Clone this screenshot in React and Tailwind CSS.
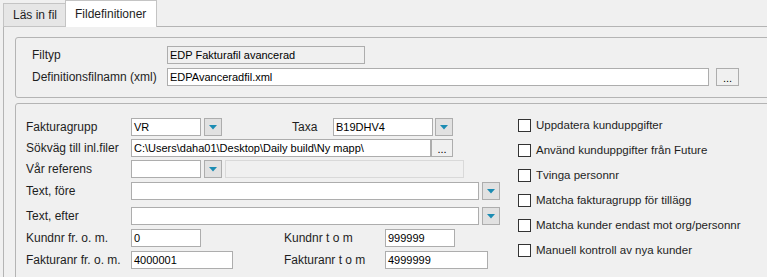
import React from "react";

const font = { fontFamily: '"Liberation Sans", Arial, sans-serif' };

function DropBtn({ className = "" }) {
  return (
    <div className={`w-[18px] h-[18px] border border-[#adadad] bg-[#e1e1e1] flex items-center justify-center ${className}`}>
      <svg width="8" height="5" viewBox="0 0 8 5">
        <path d="M0 0 H8 L4 4.5 Z" fill="#1b8cb3" />
      </svg>
    </div>
  );
}

function DotsBtn({ className = "" }) {
  return (
    <div className={`h-[18px] border border-[#adadad] bg-[#f0f0f0] flex items-end justify-center pb-[3px] text-[11px] leading-[8px] text-black ${className}`}>
      ...
    </div>
  );
}

function Input({ className = "", children, disabled }) {
  return (
    <div
      className={`h-[18px] border ${disabled ? "border-[#adadad] bg-[#f0f0f0]" : "border-[#adadad] bg-white"} px-[2px] flex items-center text-[11px] text-black whitespace-nowrap overflow-hidden ${className}`}
    >
      {children}
    </div>
  );
}

function Label({ className = "", children }) {
  return <div className={`text-[12px] text-[#1e1e1e] whitespace-nowrap ${className}`}>{children}</div>;
}

function Check({ children, className = "" }) {
  return (
    <div className={`flex items-center h-[13px] ${className}`}>
      <div className="w-[13px] h-[13px] border border-[#333] bg-white shrink-0" />
      <span className="ml-[5px] text-[11.5px] text-[#1e1e1e] whitespace-nowrap">{children}</span>
    </div>
  );
}

export default function App() {
  return (
    <div className="w-[767px] h-[277px] overflow-hidden bg-[#f0f0f0]" style={font}>
      {/* tabs */}
      <div className="flex items-end h-[27px] pl-[3px]">
        <div className="w-[62px] h-[24px] border-l border-t border-b border-[#c4c4c4] bg-[#e6e6e6] flex items-center pl-[9px] text-[12px] text-[#1e1e1e]">
          Läs in fil
        </div>
        <div className="w-[92px] h-[27px] border border-b-0 border-[#c4c4c4] bg-white flex items-center pl-[9px] text-[12px] text-[#1e1e1e]">
          Fildefinitioner
        </div>
        <div className="flex-1 h-[27px] border-b border-[#b4b4b4]" />
      </div>
      {/* panel */}
      <div className="ml-[3px] border-l border-[#b4b4b4] h-[250px] pl-[11px] pt-[10px]">
        {/* group 1 */}
        <div className="w-[800px] h-[61px] border border-[#b4b4b4] rounded-[3px] pl-[16px] pt-[8px]">
          <div className="flex items-center h-[18px]">
            <Label className="w-[135px]">Filtyp</Label>
            <Input disabled className="w-[198px]">EDP Fakturafil avancerad</Input>
          </div>
          <div className="flex items-center h-[18px] mt-[4px]">
            <Label className="w-[135px]">Definitionsfilnamn (xml)</Label>
            <Input className="w-[542px]">EDPAvanceradfil.xml</Input>
            <DotsBtn className="w-[23px] ml-[7px]" />
          </div>
        </div>
        {/* group 2 */}
        <div className="w-[800px] h-[200px] mt-[5px] border border-[#b4b4b4] rounded-[3px] pl-[10px] flex">
          <div className="w-[492px] pt-[14px]">
            <div className="flex items-center h-[18px]">
              <Label className="w-[105px]">Fakturagrupp</Label>
              <Input className="w-[70px]">VR</Input>
              <DropBtn className="ml-[3px]" />
              <Label className="w-[41px] ml-[70px]">Taxa</Label>
              <Input className="w-[100px]">B19DHV4</Input>
              <DropBtn className="ml-[2px]" />
            </div>
            <div className="flex items-center h-[18px] mt-[3px]">
              <Label className="w-[105px]">Sökväg till inl.filer</Label>
              <Input className="w-[300px]">C:\Users\daha01\Desktop\Daily build\Ny mapp\</Input>
              <DotsBtn className="w-[22px]" />
            </div>
            <div className="flex items-center h-[18px] mt-[3px]">
              <Label className="w-[105px]">Vår referens</Label>
              <Input className="w-[70px]" />
              <DropBtn className="ml-[3px]" />
              <div className="w-[239px] h-[18px] ml-[3px] border border-[#d9d9d9] bg-[#f0f0f0]" />
            </div>
            <div className="flex items-center h-[18px] mt-[4px]">
              <Label className="w-[105px]">Text, före</Label>
              <Input className="w-[348px]" />
              <DropBtn className="ml-[3px] w-[17px]" />
            </div>
            <div className="flex items-center h-[18px] mt-[7px]">
              <Label className="w-[105px]">Text, efter</Label>
              <Input className="w-[348px]" />
              <DropBtn className="ml-[3px] w-[17px]" />
            </div>
            <div className="flex items-center h-[18px] mt-[4px]">
              <Label className="w-[105px]">Kundnr fr. o. m.</Label>
              <Input className="w-[70px]">0</Input>
              <Label className="w-[101px] ml-[83px]">Kundnr t o m</Label>
              <Input className="w-[70px]">999999</Input>
            </div>
            <div className="flex items-center h-[18px] mt-[4px]">
              <Label className="w-[105px]">Fakturanr fr. o. m.</Label>
              <Input className="w-[102px]">4000001</Input>
              <Label className="w-[101px] ml-[51px]">Fakturanr t o m</Label>
              <Input className="w-[103px]">4999999</Input>
            </div>
          </div>
          <div className="pt-[15px] flex flex-col gap-[12px]">
            <Check>Uppdatera kunduppgifter</Check>
            <Check>Använd kunduppgifter från Future</Check>
            <Check>Tvinga personnr</Check>
            <Check>Matcha fakturagrupp för tillägg</Check>
            <Check>Matcha kunder endast mot org/personnr</Check>
            <Check>Manuell kontroll av nya kunder</Check>
          </div>
        </div>
      </div>
    </div>
  );
}
